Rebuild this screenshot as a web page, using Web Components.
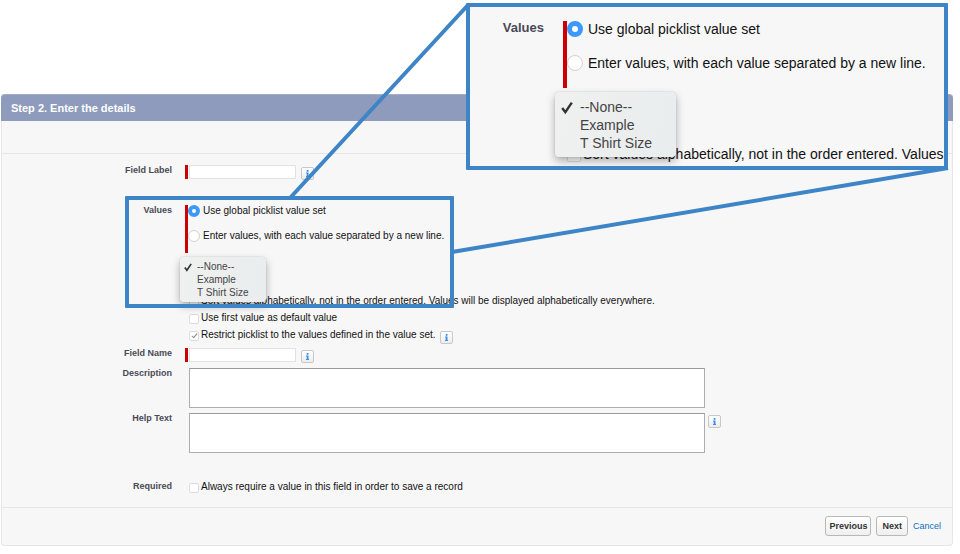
<!DOCTYPE html>
<html lang="en">
<head>
<meta charset="utf-8">
<meta name="viewport" content="width=device-width, initial-scale=1">
<title>New Custom Field</title>
<style>
  body {
    margin: 0;
    position: relative;
    background: #fff;
    color: #111;
    font: 10px/12px "Liberation Sans", Arial, sans-serif;
  }

  wizard-panel {
    margin: 94px 7px 8px 1px;
  }

  .values-row { margin-top: 25px; }
  .name-row { margin-top: 7px; }
  .description-row { margin-top: 5px; }
  .help-row { margin-top: 5px; }
  .required-row { margin-top: 28px; }

  .source {
    left: 125px;
    top: 196px;
    width: 329px;
    height: 112px;
  }

  .magnified {
    left: 466px;
    top: 3px;
    width: 482px;
    height: 167px;
    background: #f7f7f7;
  }

  .magnified picklist-values {
    margin-top: 14px;
  }
</style>
</head>
<body>

<wizard-panel heading="Step 2. Enter the details">
  <text-field label="Field Label" required info></text-field>
  <picklist-values class="values-row" sort-label="Sort values alphabetically, not in the order entered. Values will be displayed alphabetically everywhere.">
    <check-option label="Use first value as default value"></check-option>
    <check-option label="Restrict picklist to the values defined in the value set." checked info></check-option>
  </picklist-values>
  <text-field class="name-row" label="Field Name" required info></text-field>
  <text-field class="description-row" label="Description" multiline></text-field>
  <text-field class="help-row" label="Help Text" multiline info></text-field>
  <form-row class="required-row" label="Required">
    <check-option label="Always require a value in this field in order to save a record"></check-option>
  </form-row>
</wizard-panel>

<callout-lines></callout-lines>
<callout-box class="source"></callout-box>
<callout-box class="magnified">
  <picklist-values large sort-label="Sort values alphabetically, not in the order entered. Values"></picklist-values>
</callout-box>

<script>
  const labelStyles = `
    .label {
      flex: none;
      box-sizing: border-box;
      width: 170px;
      color: #4a4a56;
      font-size: 9px;
      font-weight: bold;
      line-height: 11px;
      text-align: right;
    }
  `;

  class InfoButton extends HTMLElement {
    connectedCallback() {
      this.attachShadow({ mode: "open" }).innerHTML = `
        <style>
          :host { display: block; flex: none; }
          button {
            display: flex;
            align-items: center;
            justify-content: center;
            width: 13px;
            height: 13px;
            padding: 0;
            border: 1px solid #c8c8cc;
            border-radius: 2px;
            background: linear-gradient(#fff, #ececee);
          }
        </style>
        <button type="button" aria-label="Help">
          <svg width="3" height="7" viewBox="0 0 3 7" fill="#3a8fe6">
            <path d="M.7 0h1.8v1.7H.7zM0 2.5h2.5V6H3v1H0V6h.7V3.5H0z"/>
          </svg>
        </button>
      `;
    }
  }

  class FormRow extends HTMLElement {
    connectedCallback() {
      this.attachShadow({ mode: "open" }).innerHTML = `
        <style>
          ${labelStyles}
          :host { display: flex; align-items: flex-start; }
          .content { margin-left: 17px; }
        </style>
        <span class="label">${this.getAttribute("label")}</span>
        <div class="content"><slot></slot></div>
      `;
    }
  }

  class TextField extends HTMLElement {
    connectedCallback() {
      const multiline = this.hasAttribute("multiline");

      this.attachShadow({ mode: "open" }).innerHTML = `
        <style>
          ${labelStyles}
          :host { display: flex; align-items: flex-start; }
          .bar {
            flex: none;
            width: 3px;
            height: 14px;
            margin: 0 1px 0 13px;
          }
          :host([required]) .bar { background: #c00; }
          input, textarea {
            box-sizing: border-box;
            margin: 0;
            padding: 1px 3px;
            background: #fff;
            font: inherit;
          }
          input {
            width: 107px;
            height: 14px;
            border: 1px solid #e2e2e2;
          }
          textarea {
            flex: 0 1 516px;
            min-width: 0;
            height: 40px;
            border: 1px solid #adadad;
            border-top-color: #999;
            resize: none;
          }
          info-button { margin: 2px 0 0 ${multiline ? 3 : 5}px; }
        </style>
        <label class="label" for="control">${this.getAttribute("label")}</label>
        <span class="bar"></span>
        ${multiline ? `<textarea id="control"></textarea>` : `<input id="control" type="text">`}
        ${this.hasAttribute("info") ? `<info-button></info-button>` : ""}
      `;
    }
  }

  class CheckOption extends HTMLElement {
    connectedCallback() {
      const checked = this.hasAttribute("checked") ? "checked" : "";

      this.attachShadow({ mode: "open" }).innerHTML = `
        <style>
          :host {
            display: flex;
            align-items: flex-start;
            height: var(--line, 12px);
            white-space: nowrap;
          }
          label { display: flex; align-items: center; }
          input {
            appearance: none;
            box-sizing: border-box;
            display: flex;
            justify-content: center;
            flex: none;
            width: var(--box, 10px);
            height: var(--box, 10px);
            margin: 1px 2px 0 0;
            border: 1px solid #dcdcdc;
            border-radius: 2px;
            background: #fff;
          }
          input:checked::after {
            content: "";
            width: 2px;
            height: 5px;
            border: solid #8c8c8c;
            border-width: 0 1px 1px 0;
            transform: rotate(40deg);
          }
          info-button { margin: 2px 0 0 4px; }
        </style>
        <label><input type="checkbox" ${checked}>${this.getAttribute("label")}</label>
        ${this.hasAttribute("info") ? `<info-button></info-button>` : ""}
      `;
    }
  }

  class PicklistMenu extends HTMLElement {
    connectedCallback() {
      this.attachShadow({ mode: "open" }).innerHTML = `
        <style>
          :host {
            display: flex;
            box-sizing: border-box;
            padding: var(--menu-top) 0 var(--menu-bottom) var(--check-inset);
            border-radius: 4px;
            background: linear-gradient(100deg, #f0f0f0, #e9eded);
            box-shadow: 0 0 1px rgba(0, 0, 0, .35), 0 4px 9px rgba(0, 0, 0, .3);
          }
          svg {
            flex: none;
            width: var(--check);
            height: var(--option);
            margin-right: var(--check-gap);
          }
          select {
            appearance: none;
            flex: 1;
            min-width: 0;
            height: calc(var(--option) * 3);
            margin: 0;
            padding: 0;
            border: 0;
            outline: 0;
            background: none;
            color: #444;
            font: inherit;
            overflow: hidden;
            scrollbar-width: none;
          }
          option {
            min-height: 0;
            height: var(--option);
            padding: 0;
            line-height: var(--option);
          }
          option:checked {
            background: linear-gradient(transparent, transparent);
            background-color: transparent !important;
            color: #444 !important;
          }
        </style>
        <svg viewBox="0 0 10 12" fill="none" stroke="#333" stroke-width="2">
          <path d="M1 6 3.6 9.5 9 1.5"/>
        </svg>
        <select size="3" aria-label="Global value set">
          <option selected>--None--</option>
          <option>Example</option>
          <option>T Shirt Size</option>
        </select>
      `;
    }
  }

  class PicklistValues extends HTMLElement {
    connectedCallback() {
      this.attachShadow({ mode: "open" }).innerHTML = `
        <style>
          ${labelStyles}
          :host {
            --line: 12px;
            --box: 10px;
            --menu-top: 4px;
            --menu-bottom: 2px;
            --option: 13px;
            --check: 8px;
            --check-inset: 4px;
            --check-gap: 5px;
            --radio: 12px;
            display: flex;
            align-items: flex-start;
          }
          .content {
            position: relative;
            margin-left: 13px;
          }
          .choices {
            display: flex;
            flex-direction: column;
            gap: 13px;
            padding-bottom: 11px;
            border-left: 3px solid #c00;
            white-space: nowrap;
          }
          .choices label {
            display: flex;
            align-items: center;
            gap: 3px;
            height: var(--line);
          }
          .choices input {
            appearance: none;
            box-sizing: border-box;
            flex: none;
            width: var(--radio);
            height: var(--radio);
            margin: 0;
            border: 1px solid #d2d2d2;
            border-radius: 50%;
            background: #fff;
          }
          .choices input:checked {
            border: 4px solid #3b99fc;
          }
          .checks {
            display: flex;
            flex-direction: column;
            gap: 5px;
            margin: 42px 0 0 4px;
          }
          picklist-menu {
            position: absolute;
            left: -5px;
            top: 52px;
            width: 86px;
          }

          :host([large]) {
            --line: 16px;
            --box: 14px;
            --menu-top: 7px;
            --menu-bottom: 4px;
            --option: 18px;
            --check: 12px;
            --check-inset: 6px;
            --check-gap: 7px;
            --radio: 16px;
            font-size: 14px;
            line-height: 16px;
          }
          :host([large]) .label {
            width: 74px;
            font-size: 13px;
            line-height: 13px;
          }
          :host([large]) .content { margin-left: 19px; }
          :host([large]) .choices {
            gap: 18px;
            padding-bottom: 17px;
            border-left-width: 4px;
          }
          :host([large]) .choices label { gap: 5px; }
          :host([large]) .choices input:checked { border-width: 5px; }
          :host([large]) .checks { margin-top: 58px; }
          :host([large]) picklist-menu {
            left: -8px;
            top: 71px;
            width: 121px;
          }
        </style>
        <span class="label" id="title">Values</span>
        <div class="content" role="radiogroup" aria-labelledby="title">
          <div class="choices">
            <label><input type="radio" name="source" checked>Use global picklist value set</label>
            <label><input type="radio" name="source">Enter values, with each value separated by a new line.</label>
          </div>
          <div class="checks">
            <check-option label="${this.getAttribute("sort-label")}"></check-option>
            <slot></slot>
          </div>
          <picklist-menu></picklist-menu>
        </div>
      `;
    }
  }

  class WizardPanel extends HTMLElement {
    connectedCallback() {
      this.attachShadow({ mode: "open" }).innerHTML = `
        <style>
          :host {
            display: block;
            border: 1px solid #e6e6e6;
            border-top: 0;
            border-radius: 4px;
            background: #f7f7f7;
          }
          h1 {
            margin: 0 -1px;
            padding: 7px 10px;
            border-top: 1px solid #a3aecb;
            border-radius: 4px 4px 0 0;
            background: #8e9bbd;
            color: #fff;
            font-size: 11px;
            line-height: 12px;
          }
          .strip {
            height: 32px;
            border-bottom: 1px solid #e6e6e6;
          }
          form { padding: 11px 0 14px; }
          footer {
            display: flex;
            align-items: center;
            justify-content: flex-end;
            gap: 5px;
            padding: 8px 11px 9px;
            border-top: 1px solid #e6e6e6;
            font-size: 9px;
          }
          button {
            height: 20px;
            padding: 0 3px;
            border: 1px solid #b8b8b8;
            border-radius: 3px;
            background: linear-gradient(#fff, #efefef);
            color: #333;
            font: inherit;
            font-weight: bold;
          }
          button + button { padding: 0 5px; }
          a { color: #0f6fbd; text-decoration: none; }
        </style>
        <h1>${this.getAttribute("heading")}</h1>
        <div class="strip"></div>
        <form><slot></slot></form>
        <footer>
          <button type="button">Previous</button>
          <button type="button">Next</button>
          <a href="#">Cancel</a>
        </footer>
      `;
    }
  }

  class CalloutBox extends HTMLElement {
    connectedCallback() {
      this.attachShadow({ mode: "open" }).innerHTML = `
        <style>
          :host {
            display: block;
            position: absolute;
            box-sizing: border-box;
            border: 4px solid #3d85c6;
            border-radius: 1px;
            overflow: hidden;
          }
        </style>
        <slot></slot>
      `;
    }
  }

  class CalloutLines extends HTMLElement {
    connectedCallback() {
      this.attachShadow({ mode: "open" }).innerHTML = `
        <style>
          :host {
            display: block;
            position: absolute;
            left: 0;
            top: 0;
            pointer-events: none;
          }
          svg { display: block; }
        </style>
        <svg width="950" height="310" stroke="#3d85c6" stroke-width="4">
          <path d="M468 5 290 198M948 168 452 252"/>
        </svg>
      `;
    }
  }

  customElements.define("info-button", InfoButton);
  customElements.define("form-row", FormRow);
  customElements.define("text-field", TextField);
  customElements.define("check-option", CheckOption);
  customElements.define("picklist-menu", PicklistMenu);
  customElements.define("picklist-values", PicklistValues);
  customElements.define("wizard-panel", WizardPanel);
  customElements.define("callout-box", CalloutBox);
  customElements.define("callout-lines", CalloutLines);
</script>
</body>
</html>
